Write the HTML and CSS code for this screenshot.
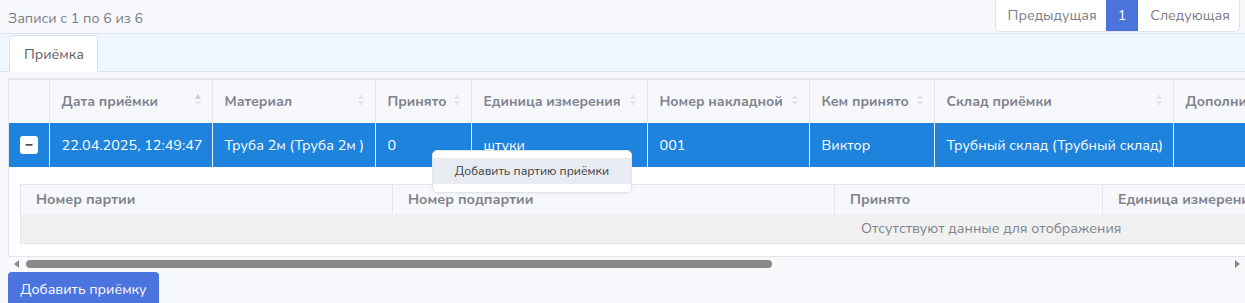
FILE: index.html
```html
<!DOCTYPE html>
<html lang="ru">
<head>
<meta charset="utf-8">
<link rel="stylesheet" href="styles.css">
</head>
<body>
<div class="topbar">
  <div class="info">Записи с 1 по 6 из 6</div>
  <div class="pager">
    <span class="pg">Предыдущая</span>
    <span class="pg active">1</span>
    <span class="pg">Следующая</span>
  </div>
</div>
<div class="tabs">
  <div class="tab">Приёмка</div>
</div>
<div class="grid-wrap">
  <div class="grid-clip">
    <table class="grid">
      <colgroup>
        <col style="width:40px"><col style="width:163px"><col style="width:163px"><col style="width:96px"><col style="width:176px"><col style="width:162px"><col style="width:125px"><col style="width:239px"><col style="width:200px">
      </colgroup>
      <thead>
        <tr>
          <th></th>
          <th><span>Дата приёмки</span><i class="sort up"></i></th>
          <th><span>Материал</span><i class="sort"></i></th>
          <th><span>Принято</span><i class="sort"></i></th>
          <th><span>Единица измерения</span><i class="sort"></i></th>
          <th><span>Номер накладной</span><i class="sort"></i></th>
          <th><span>Кем принято</span><i class="sort"></i></th>
          <th><span>Склад приёмки</span><i class="sort"></i></th>
          <th><span>Дополнительно</span></th>
        </tr>
      </thead>
      <tbody>
        <tr class="sel">
          <td class="exp"><span class="expbtn">−</span></td>
          <td>22.04.2025, 12:49:47</td>
          <td>Труба 2м (Труба 2м )</td>
          <td>0</td>
          <td>штуки</td>
          <td>001</td>
          <td>Виктор</td>
          <td>Трубный склад (Трубный склад)</td>
          <td></td>
        </tr>
        <tr class="detail">
          <td colspan="9">
            <table class="sub">
              <colgroup>
                <col style="width:372px"><col style="width:442px"><col style="width:268px"><col style="width:500px">
              </colgroup>
              <thead>
                <tr><th>Номер партии</th><th>Номер подпартии</th><th>Принято</th><th>Единица измерения</th></tr>
              </thead>
              <tbody>
                <tr class="nodata"><td colspan="4"><span>Отсутствуют данные для отображения</span></td></tr>
              </tbody>
            </table>
          </td>
        </tr>
      </tbody>
    </table>
  </div>
  <div class="hscroll">
    <span class="arr left"></span>
    <span class="thumb"></span>
    <span class="arr right"></span>
  </div>
  <div class="ctx">
    <div class="ctx-item">Добавить партию приёмки</div>
  </div>
</div>
<button class="addbtn">Добавить приёмку</button>
</body>
</html>
```
FILE: styles.css
```css
* { box-sizing: border-box; }
html, body { margin: 0; padding: 0; }
body {
  background: #f7f8fc;
  font-family: "Nunito", "Open Sans", "Noto Sans", sans-serif;
  font-size: 14.3px;
  color: #333;
  width: 1245px;
  height: 303px;
  overflow: hidden;
}
.topbar {
  display: flex;
  justify-content: space-between;
  align-items: flex-start;
  height: 33px;
  padding: 0 5px 0 8px;
}
.info {
  margin-top: 9px;
  color: #7a7c86;
  font-size: 14.3px;
}
.pager {
  display: flex;
  height: 32px;
  border: 1px solid #e2e4ec;
  border-top: none;
  border-radius: 0 0 5px 5px;
  background: #fff;
  overflow: hidden;
}
.pg {
  display: flex;
  align-items: center;
  padding: 0 9px 0 12px;
  color: #7a7c86;
  font-size: 14.3px;
}
.pg.active {
  background: #4a74dc;
  color: #fff;
  padding: 0 12px;
}
.tabs {
  height: 39px;
  background: #eef6ff;
  border-top: 1px solid #dde1ea;
  border-bottom: 1px solid #dde1ea;
  padding: 1px 0 0 9px;
  display: flex;
}
.tab {
  width: 89px;
  height: 37px;
  margin-bottom: -1px;
  background: #fff;
  border: 1px solid #dde1ea;
  border-bottom: none;
  border-radius: 4px 4px 0 0;
  display: flex;
  align-items: center;
  padding-left: 14px;
  color: #5a5c66;
  font-size: 14.3px;
}
.grid-wrap {
  position: relative;
  margin: 6px 0 0 8px;
}
.grid-clip {
  overflow: hidden;
  border-left: 1px solid #e4e6ef;
  border-top: 2px solid #e4e6ef;
  border-bottom: 1px solid #e4e6ef;
  background: #fff;
}
.grid {
  border-collapse: collapse;
  table-layout: fixed;
  width: 1364px;
}
.grid > thead th {
  height: 43px;
  background: #f7f8fc;
  border-right: 1px solid #e4e6ef;
  text-align: left;
  font-weight: 700;
  color: #80828c;
  padding: 0 12px;
  white-space: nowrap;
  position: relative;
  font-size: 14px;
  overflow: hidden;
}
.sort {
  position: absolute;
  right: 10px;
  top: 14px;
  width: 7px;
  height: 13px;
}
.sort::before, .sort::after {
  content: "";
  position: absolute;
  left: 0;
  border-left: 3.5px solid transparent;
  border-right: 3.5px solid transparent;
}
.sort::before { top: 0; border-bottom: 5px solid #e3e5ea; }
.sort::after { top: 7px; border-top: 5px solid #e3e5ea; }
.sort.up::before { border-bottom-color: #c9ccd3; }
.sel td {
  height: 44px;
  background: #1e83dc;
  color: #fff;
  border-right: 1px solid #e9eefa;
  padding: 0 12px;
  white-space: nowrap;
  font-size: 14.4px;
}
.sel td.exp { padding: 0 0 0 11px; }
.expbtn {
  display: flex;
  width: 18px;
  height: 18px;
  background: #fff;
  border-radius: 3px;
  color: #222;
  font-size: 14px;
  line-height: 1;
  align-items: center;
  justify-content: center;
  font-weight: 700;
}
.detail > td {
  padding: 17px 0 12px 11px;
  background: #fff;
}
.sub {
  border-collapse: collapse;
  table-layout: fixed;
  width: 1582px;
  border: 1px solid #e4e6ef;
}
.sub th {
  height: 29px;
  background: #f7f8fc;
  border-right: 1px solid #e4e6ef;
  text-align: left;
  font-weight: 700;
  color: #80828c;
  padding: 0 15px;
  white-space: nowrap;
  font-size: 14.3px;
  overflow: hidden;
}
.nodata td {
  height: 30px;
  background: #f1f1f1;
  color: #80828c;
  font-size: 14.3px;
  padding: 0 0 0 840px;
  white-space: nowrap;
}
.hscroll {
  position: relative;
  height: 14px;
  background: #f9f9fb;
}
.thumb {
  position: absolute;
  left: 18px;
  top: 3px;
  width: 746px;
  height: 8px;
  border-radius: 4px;
  background: #8a8a8a;
}
.arr {
  position: absolute;
  top: 3px;
  width: 0;
  height: 0;
  border-top: 4px solid transparent;
  border-bottom: 4px solid transparent;
}
.arr.left { left: 6px; border-right: 5px solid #8a8a8a; }
.arr.right { right: 5px; border-left: 5px solid #8a8a8a; }
.ctx {
  position: absolute;
  left: 424px;
  top: 72px;
  width: 200px;
  padding: 7px 0 8px;
  background: #fff;
  border: 1px solid #e2e4ec;
  border-radius: 5px;
  box-shadow: 0 1px 3px rgba(0,0,0,0.05);
}
.ctx-item {
  height: 26px;
  background: #e8ebf2;
  color: #3c3e46;
  font-size: 12.2px;
  display: flex;
  align-items: center;
  justify-content: center;
}
.addbtn {
  display: block;
  margin: 1px 0 0 8px;
  height: 34px;
  width: 151px;
  border: none;
  border-radius: 4px;
  background: #4c74de;
  color: #fff;
  font-family: inherit;
  font-size: 14.3px;
  padding: 0;
}
```
